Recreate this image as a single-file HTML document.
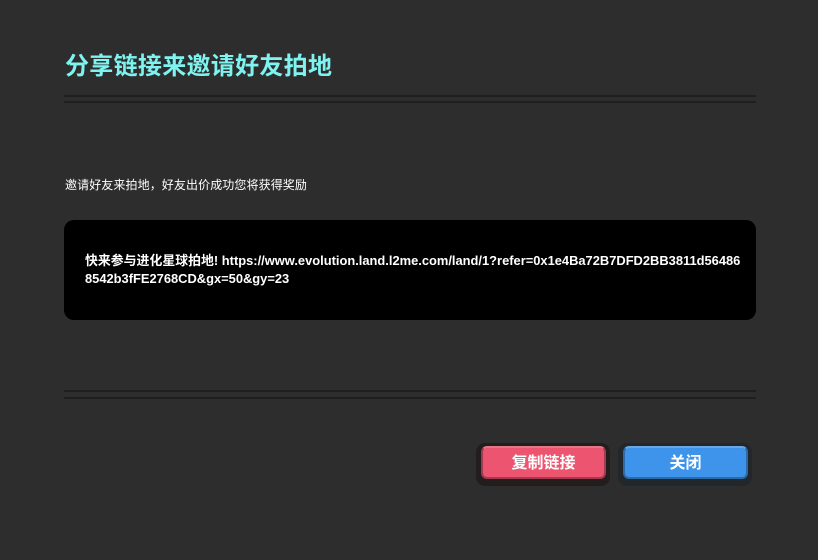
<!DOCTYPE html>
<html><head><meta charset="utf-8"><style>
html,body{margin:0;padding:0;width:818px;height:560px;background:#2d2d2d;overflow:hidden;font-family:"Liberation Sans","Noto Sans CJK SC",sans-serif;}
.t{position:absolute;left:65px;top:46px;font-size:24px;font-weight:bold;color:#7ef3f0;letter-spacing:0.3px;}
.ln{position:absolute;left:64px;width:692px;height:2px;background:#1f1f1f;}
.sub{position:absolute;left:65px;top:176px;font-size:12px;color:#fff;letter-spacing:0.1px;}
.box{position:absolute;left:64px;top:220px;width:692px;height:100px;background:#000;border-radius:10px;}
.box div{position:absolute;left:21px;top:32px;font-size:12.9px;font-weight:bold;color:#fff;line-height:18px;white-space:nowrap;}
.bo{position:absolute;top:443px;height:43px;border-radius:9px;}
.bi{position:absolute;left:5px;top:3px;right:4px;height:33px;border-radius:6px;color:#fff;font-weight:bold;font-size:16px;text-align:center;line-height:31px;box-sizing:border-box;}
</style></head><body>
<div class="t">分享链接来邀请好友拍地</div>
<div class="ln" style="top:95px"></div>
<div class="ln" style="top:101px"></div>
<div class="sub">邀请好友来拍地，好友出价成功您将获得奖励</div>
<div class="box"><div>快来参与进化星球拍地! https://www.evolution.land.l2me.com/land/1?refer=0x1e4Ba72B7DFD2BB3811d56486<br>8542b3fFE2768CD&amp;gx=50&amp;gy=23</div></div>
<div class="ln" style="top:390px"></div>
<div class="ln" style="top:397px"></div>
<div class="bo" style="left:476px;width:134px;background:#231d1e"><div class="bi" style="background:#ec5470;border:2px solid #a33a4f;border-top-color:#e0788a">复制链接</div></div>
<div class="bo" style="left:618px;width:134px;background:#22272c"><div class="bi" style="background:#3e94ea;border:2px solid #2d6aa6;border-top-color:#6aa7e0">关闭</div></div>
</body></html>
